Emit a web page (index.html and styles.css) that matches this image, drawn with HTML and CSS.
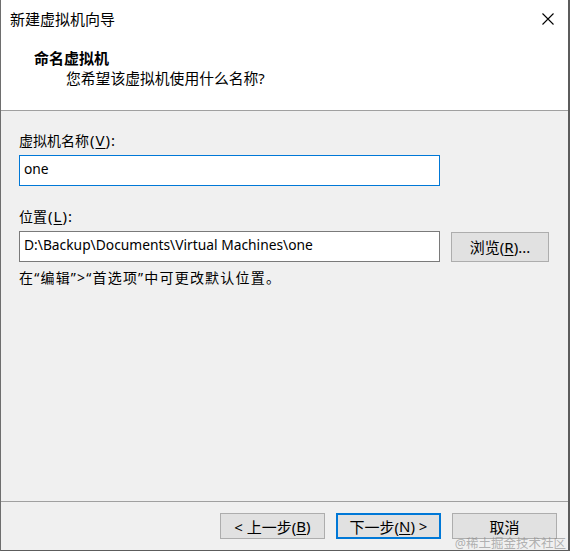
FILE: index.html
```html
<!DOCTYPE html>
<html lang="zh-CN">
<head>
<meta charset="utf-8">
<title>新建虚拟机向导</title>
<link rel="stylesheet" href="styles.css">
</head>
<body>
<div class="window">
  <div class="titlebar">
    <span class="title">新建虚拟机向导</span>
    <span class="close">
      <svg width="12" height="12" viewBox="0 0 12 12"><path d="M0.5 0.5 L11.5 11.5 M11.5 0.5 L0.5 11.5" stroke="#000" stroke-width="1.1" fill="none"/></svg>
    </span>
  </div>
  <div class="header">
    <div class="heading">命名虚拟机</div>
    <div class="subheading">您希望该虚拟机使用什么名称?</div>
  </div>
  <div class="content">
    <div class="label">虚拟机名称<span class="key">(<u>V</u>):</span></div>
    <div class="row">
      <div class="input focused">one</div>
    </div>
    <div class="label second">位置<span class="key">(<u>L</u>):</span></div>
    <div class="row">
      <div class="input">D:\Backup\Documents\Virtual Machines\one</div>
      <div class="btn browse">浏览(<u>R</u>)...</div>
    </div>
    <div class="hint">在“编辑”&gt;“首选项”中可更改默认位置。</div>
  </div>
  <div class="footer">
    <div class="btn">&lt; 上一步(<u>B</u>)</div>
    <div class="btn default">下一步(<u>N</u>) &gt;</div>
    <div class="btn">取消</div>
  </div>
  <div class="watermark">@稀土掘金技术社区</div>
</div>
</body>
</html>
```

FILE: styles.css
```css
* { box-sizing: border-box; }
html, body { margin: 0; padding: 0; }
body {
  font-family: "Noto Sans", "Noto Sans CJK SC", sans-serif;
  font-size: 14px;
  color: #000;
  background: #fff;
}
.window {
  position: relative;
  width: 570px;
  height: 551px;
  border-left: 1px solid #6e6e6e;
  border-right: 2px solid #5c5c5c;
  border-bottom: 1px solid #5c5c5c;
  display: flex;
  flex-direction: column;
  background: #f0f0f0;
}
.titlebar {
  height: 38px;
  background: #fff;
  display: flex;
  align-items: center;
  justify-content: space-between;
  padding: 0 14px 0 9px;
}
.title { font-size: 15px; line-height: 20px; }
.close { display: flex; width: 12px; height: 12px; }
.header {
  height: 73px;
  background: #fff;
  border-bottom: 1px solid #a0a0a0;
  padding: 10px 0 0 33px;
}
.heading { font-size: 15px; font-weight: bold; line-height: 20px; }
.subheading { font-size: 14.8px; line-height: 21px; padding-left: 32px; }
.content {
  flex: 1;
  padding: 19px 0 0 18px;
  border-bottom: 1px solid #a0a0a0;
}
.label { font-size: 14px; line-height: 20px; height: 20px; margin-bottom: 5px; }
.label .key { font-size: 15px; letter-spacing: 1px; margin-left: 1px; }
.label.second { margin-top: 20px; margin-bottom: 5px; }
.row { display: flex; align-items: center; gap: 11px; }
.input {
  width: 421px;
  height: 31px;
  background: #fff;
  border: 1px solid #7a7a7a;
  padding: 0 4px 3px 4px;
  font-size: 13.8px;
  line-height: 26px;
  white-space: nowrap;
}
.input.focused { border-color: #0078d7; }
.hint { font-size: 14px; line-height: 20px; margin-top: 6px; letter-spacing: 1.2px; }
.btn {
  width: 98px;
  height: 30px;
  background: #e1e1e1;
  border: 1px solid #adadad;
  display: flex;
  align-items: center;
  justify-content: center;
  font-size: 15px;
}
.footer {
  height: 48px;
  display: flex;
  gap: 11px;
  justify-content: flex-end;
  padding: 11px 11px 0 0;
}
.footer .btn { width: 105px; height: 26px; }
.footer .btn.default { border: 2px solid #0078d7; }
u { text-decoration-thickness: 1px; text-underline-offset: 2px; }
.watermark {
  position: absolute;
  right: 2px;
  bottom: -1px;
  font-size: 12.5px;
  line-height: 14px;
  color: rgba(140, 140, 140, 0.65);
}
```
